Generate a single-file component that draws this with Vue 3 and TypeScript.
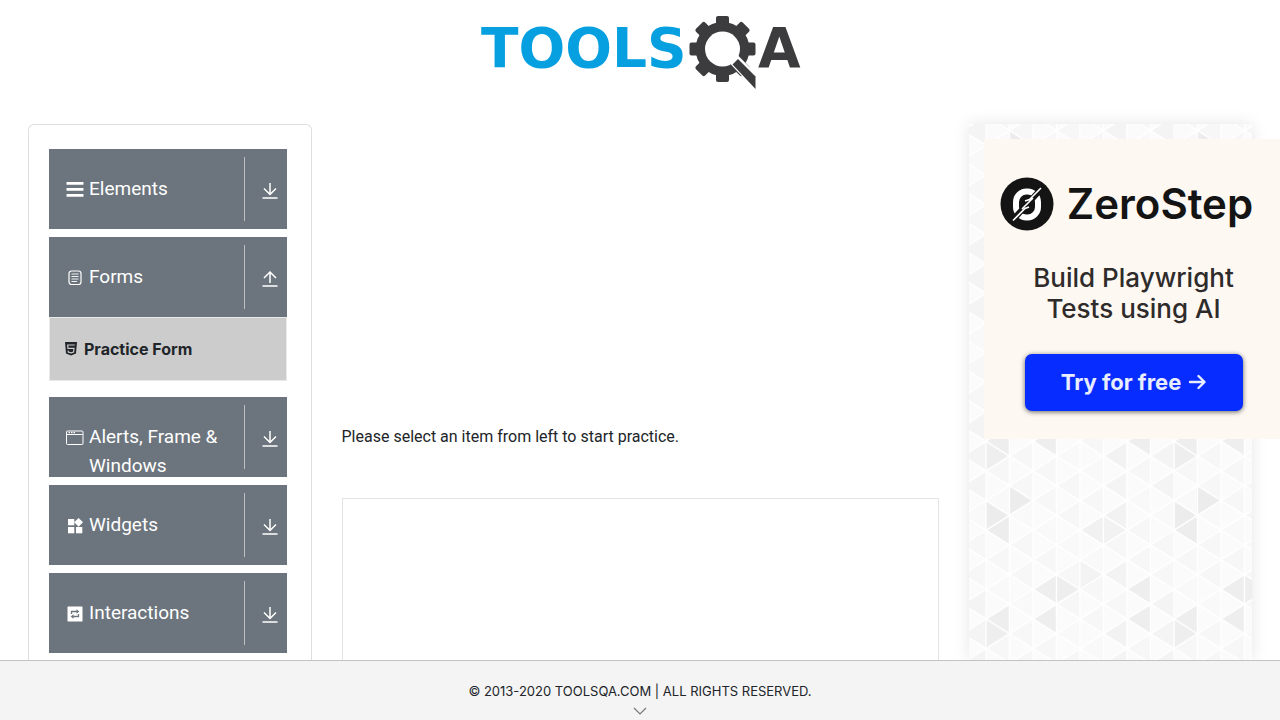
<script setup lang="ts">
import { ref } from 'vue'

interface MenuGroup {
  name: string
  icon: string
  children: string[]
}

const groups: MenuGroup[] = [
  { name: 'Elements', icon: 'bars', children: [] },
  { name: 'Forms', icon: 'form', children: ['Practice Form'] },
  { name: 'Alerts, Frame & Windows', icon: 'window', children: [] },
  { name: 'Widgets', icon: 'widgets', children: [] },
  { name: 'Interactions', icon: 'swap', children: [] },
]
const open = ref('Forms')
const toggle = (name: string) => {
  open.value = open.value === name ? '' : name
}

// Triangular backdrop: 8 strips, 6 vertices per repeat.
const STEP = 23.5
const ROW = 29.6
const TILE_W = STEP * 8
const TILE_H = ROW * 6

// Shaded cells, as "strip / direction / apex in half rows".
const shades: Record<string, string> = {
  '0R0': '#eeeeee', '0R4': '#ececec', '0L5': '#ededed', '0L11': '#eeeeee',
  '1R3': '#ececec', '2L9': '#eeeeee', '2L11': '#eeeeee', '3R9': '#eeeeee',
  '4L5': '#f1f1f1', '4R8': '#f3f3f3', '5L0': '#f2f2f2', '5L2': '#f4f4f4',
  '5L4': '#f2f2f2', '5L8': '#f3f3f3', '5R5': '#f2f2f2', '6L9': '#eeeeee',
  '6L11': '#eeeeee', '7L0': '#f4f4f4', '7L2': '#f4f4f4', '7L10': '#f4f4f4',
}

interface Cell {
  points: string
  fill: string
}
const cells: Cell[] = []
for (let strip = 0; strip < 8; strip++) {
  const x0 = strip * STEP
  const x1 = x0 + STEP
  for (let half = -1; half <= 13; half++) {
    const odd = Math.abs(half) % 2
    const y = (half * ROW) / 2
    const key = (half + 12) % 12
    // Apexes sit on odd half rows along even lines, and the reverse.
    const left = odd !== strip % 2
    const apex = left ? x0 : x1
    const base = left ? x1 : x0
    const plain = left ? ((strip * 5 + key) % 3 ? '#f7f7f7' : '#f9f9f9') : '#fbfbfb'
    cells.push({
      points: `${apex},${y} ${base},${y - ROW / 2} ${base},${y + ROW / 2}`,
      fill: shades[`${strip}${left ? 'L' : 'R'}${key}`] ?? plain,
    })
  }
}
</script>

<template>
  <div class="page">
    <header class="top">
      <a href="#" class="brand" aria-label="TOOLSQA">
        <svg width="324" height="80" viewBox="0 0 324 80">
          <text class="word blue" x="3" y="55">TOOLS</text>
          <g transform="translate(244.500 37)" fill="#3c3c3e">
            <rect v-for="n in 8" :key="n" x="-6.500" y="-33" width="13" height="14" rx="2" :transform="`rotate(${n * 45})`" />
            <circle r="27" />
            <circle r="17.500" fill="#fff" />
            <path d="M7 14 L15 6 L36 27 L36 45 Z" fill="#fff" />
            <path d="M10 15.500 L15.500 10 L33 27.500 L33 40 Z" />
          </g>
          <text class="word dark" x="280" y="55">A</text>
        </svg>
      </a>
    </header>

    <main class="row">
      <div class="col">
        <nav class="panel">
          <div v-for="g in groups" :key="g.name" class="group">
            <button type="button" class="head" :aria-expanded="open === g.name" @click="toggle(g.name)">
              <svg class="icon" width="18" height="18" viewBox="0 0 18 18">
                <g v-if="g.icon === 'bars'" fill="#fff">
                  <rect x="0.500" y="1" width="17" height="2.800" rx="0.500" />
                  <rect x="0.500" y="7" width="17" height="2.800" rx="0.500" />
                  <rect x="0.500" y="13" width="17" height="2.800" rx="0.500" />
                </g>
                <g v-else-if="g.icon === 'form'" fill="none" stroke="#fff">
                  <rect x="3" y="2" width="12" height="13.500" rx="2.500" stroke-width="1.200" />
                  <path d="M5.500 5H12.500M5.500 7.500H12.500M5.500 10H12.500M5.500 12.500H11" stroke-width="0.900" />
                </g>
                <g v-else-if="g.icon === 'window'" fill="none" stroke="#fff">
                  <rect x="0.500" y="2" width="16.500" height="13.500" rx="1" />
                  <path d="M0.500 5.500H16.500" />
                  <path d="M2.500 3.700H4M5 3.700H6.500M7.500 3.700H9" stroke-width="1.300" />
                </g>
                <g v-else-if="g.icon === 'widgets'" fill="#fff">
                  <rect x="2" y="2" width="6.300" height="6.300" />
                  <rect x="2" y="10" width="6.300" height="6.300" />
                  <rect x="10" y="10" width="6.300" height="6.300" />
                  <path d="M12.600 0.900L17 5.300L12.600 9.700L8.200 5.300Z" />
                </g>
                <g v-else>
                  <rect x="1.500" y="1.500" width="15" height="15" rx="0.500" fill="#fff" />
                  <path d="M5.500 9V6.500H11M12.500 9V11.500H7" fill="none" stroke="#6c757d" stroke-width="1.300" />
                  <path d="M10.500 4.300L13.300 6.500L10.500 8.700ZM7.500 9.300L4.700 11.500L7.500 13.700Z" fill="#6c757d" />
                </g>
              </svg>
              <span class="label">{{ g.name }}</span>
              <span class="arrow">
                <svg width="16" height="18" viewBox="0 0 16 18" fill="none" stroke="#fff" stroke-width="1.500">
                  <path v-if="open === g.name" d="M8 13V2.500M2 8L8 2L14 8M0.500 16H15.500" />
                  <path v-else d="M8 1V12M2 6.500L8 12.500L14 6.500M0.500 16H15.500" />
                </svg>
              </span>
            </button>
            <ul v-if="open === g.name && g.children.length" class="sub">
              <li v-for="c in g.children" :key="c">
                <a href="#">
                  <svg width="12" height="14" viewBox="0 0 12 14">
                    <path d="M0 0H12L11 11.500L6 13.500L1 11.500Z" fill="#212529" />
                    <path d="M9.800 3H2.700L3 6.300H9L8.600 10L6 10.900L3.300 10L3.200 8.600" fill="none" stroke="#ccc" stroke-width="1.200" />
                  </svg>
                  {{ c }}
                </a>
              </li>
            </ul>
          </div>
        </nav>
      </div>

      <div class="col middle">
        <p class="hint">Please select an item from left to start practice.</p>
        <div class="slot"></div>
      </div>

      <div class="col">
        <aside class="sponsor">
          <svg class="backdrop" width="100%" height="100%" aria-hidden="true">
            <defs>
              <pattern id="triangles" :width="TILE_W" :height="TILE_H" patternUnits="userSpaceOnUse" x="17" y="-23">
                <polygon v-for="(c, i) in cells" :key="i" :points="c.points" :fill="c.fill" stroke="#fff" stroke-width="1.300" />
              </pattern>
            </defs>
            <rect width="100%" height="100%" fill="url(#triangles)" />
          </svg>
          <div class="ad">
            <div class="ad-brand">
              <svg width="54" height="54" viewBox="0 0 54 54">
                <circle cx="27" cy="27" r="26.500" fill="#141414" />
                <rect x="16" y="14.500" width="22" height="26" rx="10.500" fill="none" stroke="#fff" stroke-width="6" />
                <path d="M11 45L42 11" stroke="#141414" stroke-width="6" />
                <path d="M13 43.500L25 31.500L29 30M41 11L29.500 22.500L25 24M22 32L33 21" fill="none" stroke="#fff" stroke-width="1.600" />
              </svg>
              <span>ZeroStep</span>
            </div>
            <p class="pitch">Build Playwright<br />Tests using AI</p>
            <a href="#" class="cta">
              Try for free
              <svg width="18" height="16" viewBox="0 0 18 16" fill="none" stroke="#e8edff" stroke-width="2.400" stroke-linecap="round" stroke-linejoin="round">
                <path d="M2 8H16M10.500 2L16.500 8L10.500 14" />
              </svg>
            </a>
          </div>
        </aside>
      </div>
    </main>

    <footer class="foot">
      <span>© 2013-2020 TOOLSQA.COM | ALL RIGHTS RESERVED.</span>
      <svg width="14" height="8" viewBox="0 0 14 8" fill="none" stroke="#777" stroke-width="1.200">
        <path d="M1 1L7 7L13 1" />
      </svg>
    </footer>
  </div>
</template>

<style>
html,
body {
  margin: 0;
  background: #fff;
}
</style>

<style scoped>
* {
  box-sizing: border-box;
}
.page {
  display: flex;
  flex-direction: column;
  height: 100vh;
  overflow: hidden;
  font-family: Inter, Roboto, sans-serif;
  font-size: 16px;
  line-height: 24px;
  color: #212529;
}
.top {
  flex: none;
  display: flex;
  justify-content: center;
  padding: 12px 0 32px;
}
.brand svg {
  display: block;
}
.word {
  font: bold 55px 'DejaVu Sans', sans-serif;
}
.blue {
  fill: #069fe0;
}
.dark {
  fill: #3c3c3e;
}
.row {
  flex: 1;
  min-height: 0;
  display: grid;
  grid-template-columns: minmax(0, 1fr) minmax(0, 2fr) minmax(0, 1fr);
  grid-template-rows: minmax(0, 1fr);
  padding: 0 13px;
}
.col {
  padding: 0 15px;
}
.middle {
  display: flex;
  flex-direction: column;
}
.panel {
  height: 100%;
  padding: 24px 24px 0 20px;
  border: 1px solid #dedede;
  border-bottom: 0;
  border-radius: 6px 6px 0 0;
}
.group {
  margin-bottom: 8px;
}
.head {
  display: flex;
  align-items: flex-start;
  width: 100%;
  height: 80px;
  padding: 0 0 0 17px;
  border: 0;
  background: #6c757d;
  color: #fff;
  font: 400 19px/29px Roboto, sans-serif;
  text-align: left;
  overflow: hidden;
  cursor: pointer;
}
.icon {
  flex: none;
  margin: 32px 5px 0 0;
}
.label {
  flex: 1;
  padding-top: 25px;
}
.arrow {
  flex: none;
  display: flex;
  align-items: center;
  justify-content: flex-end;
  width: 43px;
  height: 64px;
  margin-top: 8px;
  padding: 4px 9px 0 0;
  border-left: 1px solid #bfbfbf;
}
.sub {
  list-style: none;
  margin: 0 0 16px;
  padding: 0;
  border: 1px solid #e9e9e9;
  background: #ccc;
}
.sub a {
  display: flex;
  align-items: center;
  gap: 7px;
  height: 62px;
  padding-left: 15px;
  color: #212529;
  font-size: 16px;
  font-weight: 700;
  text-decoration: none;
}
.hint {
  margin: 301px 0 49px;
  font-family: Roboto, sans-serif;
}
.slot {
  flex: 1;
  border: 1px solid #e4e4e4;
  border-bottom: 0;
}
.sponsor {
  position: relative;
  height: 100%;
  padding: 15px;
  box-shadow: 0 0 15px rgba(0, 0, 0, 0.1);
}
.backdrop {
  position: absolute;
  inset: 0;
}
.ad {
  position: relative;
  display: flex;
  flex-direction: column;
  align-items: center;
  width: 300px;
  height: 300px;
  padding-top: 38px;
  background: #fdf8f2;
  color: #2e2b2a;
  font-family: Inter, sans-serif;
}
.ad-brand {
  display: flex;
  align-items: center;
  gap: 13px;
  margin-right: 14px;
  color: #141414;
  font-size: 42px;
  font-weight: 600;
  line-height: 54px;
}
.pitch {
  margin: 31px 0 0;
  font-size: 26px;
  font-weight: 500;
  line-height: 31px;
  text-align: center;
}
.cta {
  display: flex;
  align-items: center;
  justify-content: center;
  gap: 7px;
  width: 218px;
  height: 57px;
  margin-top: 30px;
  padding-bottom: 2px;
  border-radius: 7px;
  background: #062cff;
  box-shadow: 0 1px 5px rgba(0, 0, 0, 0.6);
  color: #e8edff;
  font-size: 22px;
  font-weight: 700;
  text-decoration: none;
}
.foot {
  position: relative;
  flex: none;
  display: flex;
  flex-direction: column;
  align-items: center;
  gap: 6px;
  height: 60px;
  padding-top: 20px;
  border-top: 1px solid #c3c3c3;
  background: #f4f4f4;
  font-size: 13px;
  line-height: 20px;
}
</style>
